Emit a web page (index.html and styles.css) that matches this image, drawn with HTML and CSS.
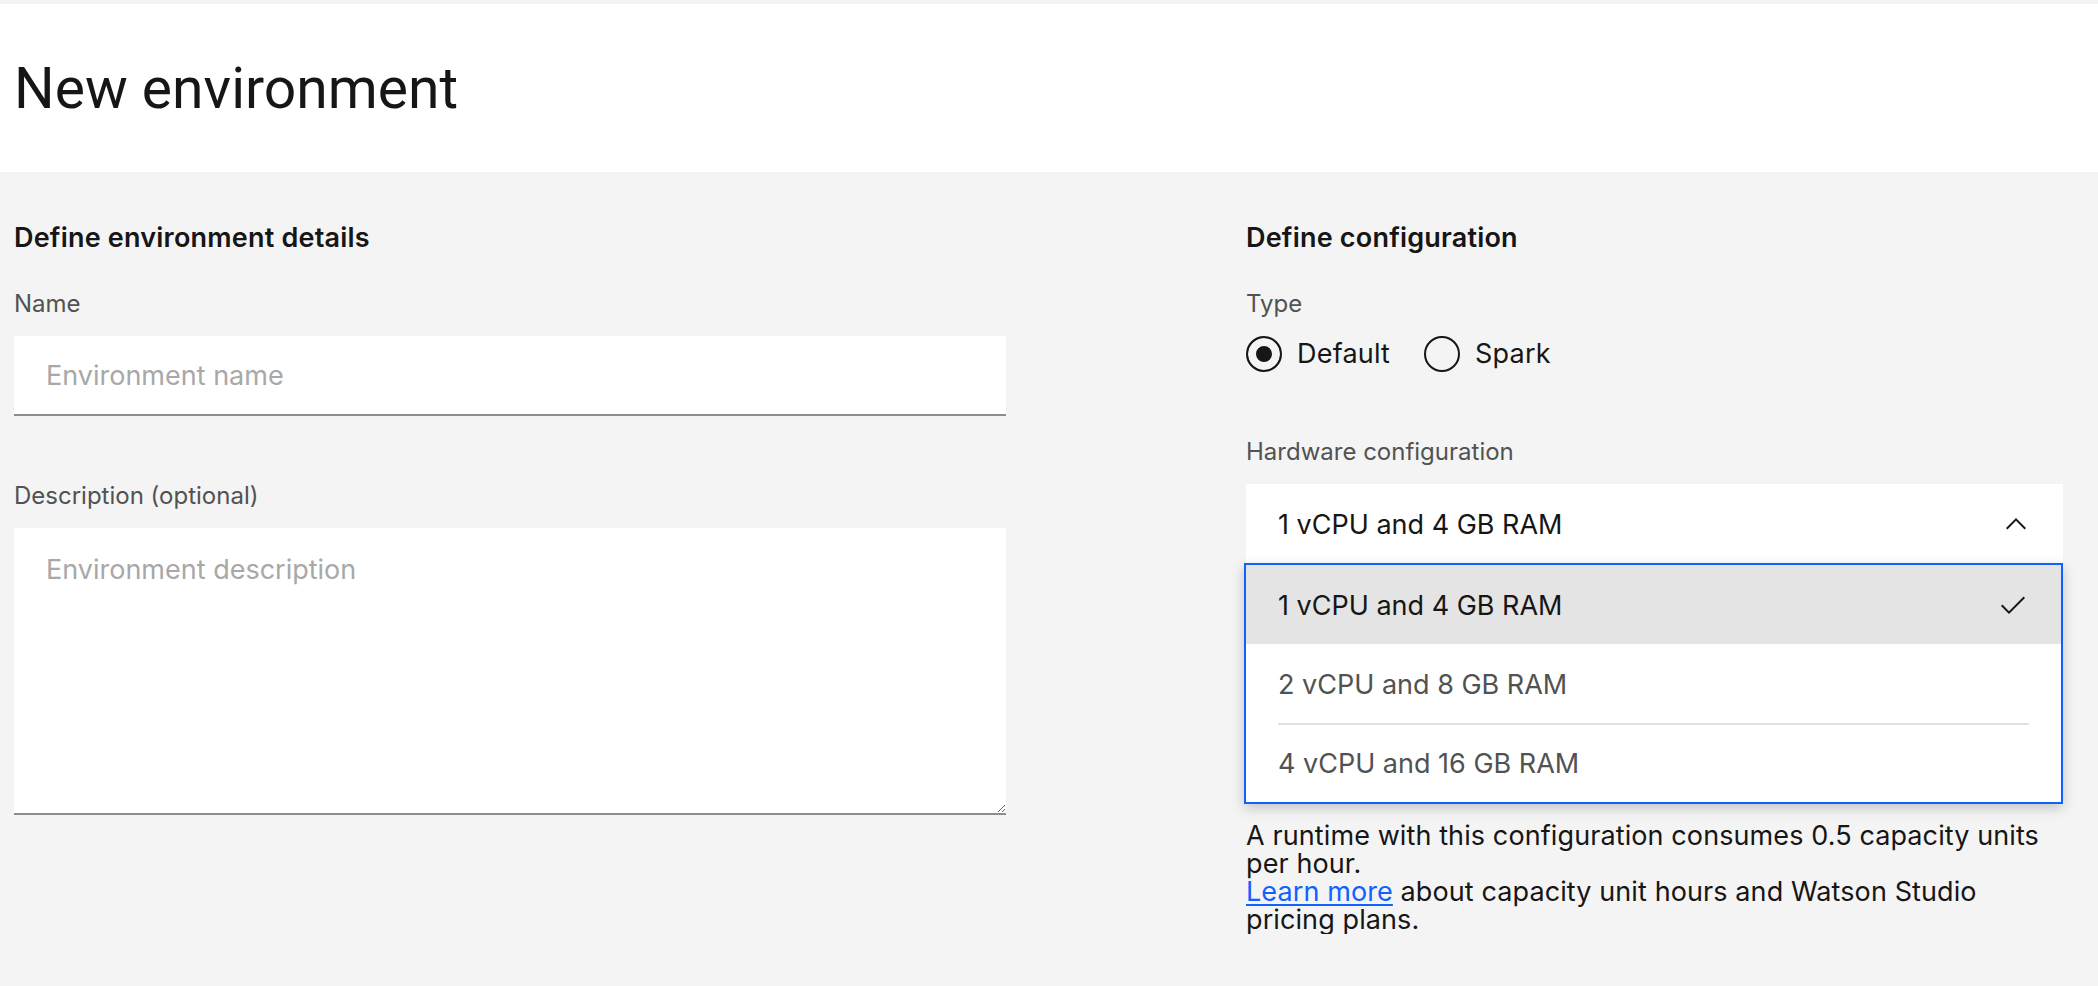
FILE: index.html
```html
<!DOCTYPE html>
<html lang="en">

<head>
  <meta charset="UTF-8">
  <meta name="viewport" content="width=device-width, initial-scale=1.0">
  <title>New environment</title>
  <link rel="stylesheet" href="styles.css">
</head>

<body>
  <header class="page-header">
    <h1 class="page-title">New environment</h1>
  </header>

  <main class="env-form">
    <section class="form-col form-col--details">
      <h2 class="section-title">Define environment details</h2>
      <div class="form-item">
        <label class="field-label" for="env-name">Name</label>
        <input class="text-input" type="text" id="env-name" placeholder="Environment name">
      </div>
      <div class="form-item">
        <label class="field-label" for="env-desc">Description (optional)</label>
        <textarea class="text-area" id="env-desc" placeholder="Environment description"></textarea>
      </div>
    </section>

    <section class="form-col form-col--config">
      <h2 class="section-title">Define configuration</h2>
      <div class="form-item">
        <span class="field-label">Type</span>
        <div class="radio-group">
          <label class="radio"><input type="radio" name="type" value="default" checked>Default</label>
          <label class="radio"><input type="radio" name="type" value="spark">Spark</label>
        </div>
      </div>
      <div class="form-item">
        <span class="field-label">Hardware configuration</span>
        <div class="dropdown">
          <button class="dropdown__field" type="button">
            <span>1 vCPU and 4 GB RAM</span>
            <svg class="dropdown__icon" viewBox="0 0 16 16" width="32" height="32">
              <path d="M8 5L13 10 12.3 10.7 8 6.4 3.7 10.7 3 10z"></path>
            </svg>
          </button>
          <ul class="dropdown__menu">
            <li class="dropdown__item is-selected">
              <div class="dropdown__option">
                <span>1 vCPU and 4 GB RAM</span>
                <svg class="dropdown__icon" viewBox="0 0 16 16" width="32" height="32">
                  <path d="M6 10.6L2.7 7.3 2 8 6 12 14 4 13.3 3.3z"></path>
                </svg>
              </div>
            </li>
            <li class="dropdown__item">
              <div class="dropdown__option"><span>2 vCPU and 8 GB RAM</span></div>
            </li>
            <li class="dropdown__item">
              <div class="dropdown__option"><span>4 vCPU and 16 GB RAM</span></div>
            </li>
          </ul>
        </div>
        <p class="helper">
          A runtime with this configuration consumes 0.5 capacity units<br>
          per hour.<br>
          <a href="#" class="helper__link">Learn more</a> about capacity unit hours and Watson Studio<br>
          pricing plans.
        </p>
      </div>
    </section>
  </main>
</body>

</html>
```

FILE: styles.css
```css
body {
  margin: 0;
  background-color: #f4f4f4;
  color: #161616;
  font-family: "Inter", "Noto Sans", sans-serif;
}

.page-header {
  margin-top: 4px;
  background-color: #fff;
  padding: 53px 14px 51px;
}

.page-title {
  margin: 0;
  font-family: "Roboto", "Liberation Sans", sans-serif;
  font-size: 57px;
  font-weight: 400;
  line-height: 64px;
}

.env-form {
  display: grid;
  grid-template-columns: 992px 817px;
  column-gap: 240px;
  padding: 48px 0 0 14px;
}

.section-title {
  margin: 0 0 32px;
  font-size: 27px;
  font-weight: 600;
  line-height: 36px;
  letter-spacing: 0.2px;
}

.form-item + .form-item {
  margin-top: 64px;
}

.field-label {
  display: block;
  margin-bottom: 16px;
  font-size: 24px;
  line-height: 32px;
  color: #525252;
}

.text-input,
.text-area {
  display: block;
  width: 100%;
  box-sizing: border-box;
  border: none;
  border-bottom: 2px solid #8d8d8d;
  background-color: #fff;
  font-family: inherit;
  font-size: 27px;
  color: #161616;
  outline: none;
}

.text-input {
  height: 80px;
  padding: 0 32px;
}

.text-area {
  height: 287px;
  padding: 24px 32px;
  line-height: 36px;
}

.text-input::placeholder,
.text-area::placeholder {
  color: #a8a8a8;
}

.radio-group {
  display: flex;
  align-items: center;
  height: 36px;
}

.radio {
  display: flex;
  align-items: center;
  margin-right: 34px;
  font-size: 27px;
  line-height: 36px;
  letter-spacing: 0.2px;
  cursor: pointer;
}

.radio input {
  appearance: none;
  width: 36px;
  height: 36px;
  margin: 0 15px 0 0;
  border: 2px solid #161616;
  border-radius: 50%;
  box-sizing: border-box;
  background-color: transparent;
}

.radio input:checked {
  background-color: #161616;
  box-shadow: inset 0 0 0 8px #f4f4f4;
}

.dropdown__field {
  display: flex;
  align-items: center;
  justify-content: space-between;
  width: 100%;
  height: 80px;
  padding: 0 31px 0 32px;
  border: none;
  background-color: #fff;
  font-family: inherit;
  font-size: 27px;
  color: #161616;
  text-align: left;
}

.dropdown__icon {
  fill: #161616;
  flex-shrink: 0;
}

.dropdown__menu {
  margin: -1px 0 0 -2px;
  padding: 0;
  list-style: none;
  border: 2px solid #0f62fe;
  background-color: #fff;
  box-shadow: 0 4px 12px rgba(0, 0, 0, 0.2);
}

.dropdown__item {
  font-size: 27px;
  color: #525252;
}

.dropdown__item.is-selected {
  background-color: #e4e4e4;
  color: #161616;
}

.dropdown__option {
  display: flex;
  align-items: center;
  justify-content: space-between;
  box-sizing: border-box;
  height: 79px;
  margin: 0 32px 0 32px;
  border-top: 2px solid transparent;
}

.dropdown__item + .dropdown__item .dropdown__option {
  border-top-color: #e0e0e0;
}

.dropdown__item.is-selected + .dropdown__item .dropdown__option {
  border-top-color: transparent;
}

.helper {
  margin: 18px 0 0;
  font-size: 27px;
  line-height: 28px;
  letter-spacing: 0.1px;
  color: #161616;
  white-space: nowrap;
}

.helper__link {
  color: #0f62fe;
  text-underline-offset: 3px;
}
```
